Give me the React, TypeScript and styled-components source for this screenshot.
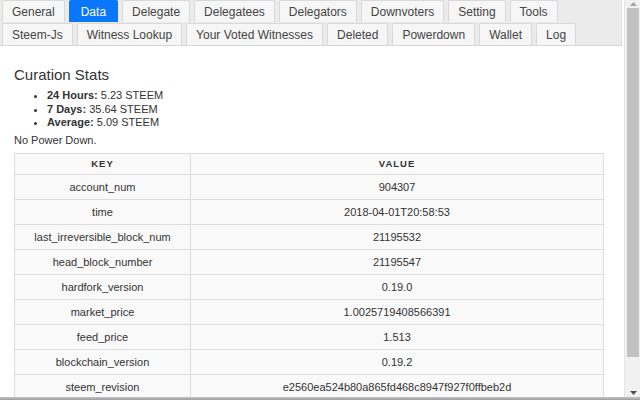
import React from "react";
import styled, { createGlobalStyle } from "styled-components";

const Global = createGlobalStyle`
  html, body { margin: 0; padding: 0; height: 400px; overflow: hidden; background: #fff; }
  body { font-family: "Liberation Sans", Arial, sans-serif; color: #333; }
`;

const Frame = styled.div`
  height: 400px;
  display: flex;
  flex-direction: column;
`;

const Viewport = styled.div`
  flex: 1;
  min-height: 0;
  display: flex;
`;

const Page = styled.div`
  flex: 1;
  min-width: 0;
  overflow: hidden;
`;

const ScrollTrack = styled.div`
  width: 16px;
  flex: none;
  background: #f1f1f1;
  border-left: 1px solid #e6e6e6;
  box-sizing: border-box;
  display: flex;
  flex-direction: column;
  align-items: center;
  padding: 0 1px 0 2px;
`;

const ArrowBox = styled.div`
  height: 8px;
  width: 100%;
  display: flex;
  align-items: center;
  justify-content: center;
  flex: none;
`;

const Thumb = styled.div`
  width: 100%;
  height: 349px;
  background: #c1c1c1;
  flex: none;
`;

const TrackSpace = styled.div`
  flex: 1;
`;

const BottomEdge = styled.div`
  height: 3px;
  background: linear-gradient(#c4c4c4, #9c9c9c);
`;

const TabBar = styled.nav`
  background: #ebebeb;
  border-right: 1px solid #dcdcdc;
  border-bottom: 1px solid #d6d6d6;
  padding: 0 0 0 2px;
  display: flex;
  flex-direction: column;
  gap: 1px;
  margin-right: 2px;
`;

const TabRow = styled.div`
  display: flex;
  gap: 4px;
`;

const Tab = styled.div<{ $active?: boolean }>`
  height: 22px;
  box-sizing: border-box;
  padding: 0 ${(p) => (p.$active ? 11 : 9)}px;
  display: flex;
  align-items: center;
  font-size: 12px;
  color: ${(p) => (p.$active ? "#fff" : "#444")};
  background: ${(p) => (p.$active ? "#0a77fb" : "#f6f6f6")};
  border: 1px solid ${(p) => (p.$active ? "#0a77fb" : "#d9d9d9")};
  border-bottom: none;
  border-radius: 2px 2px 0 0;
`;

const Content = styled.main`
  padding: 20px 18px 0 14px;
`;

const Title = styled.h3`
  margin: 0 0 5px;
  font-size: 15px;
  font-weight: normal;
  color: #333;
  line-height: 18px;
`;

const Stats = styled.ul`
  margin: 0 0 3px;
  padding-left: 33px;
  font-size: 11px;
  line-height: 13.5px;
  color: #333;
`;

const Note = styled.p`
  margin: 0 0 6px;
  font-size: 11px;
  line-height: 14px;
  color: #333;
`;

const Table = styled.table`
  width: 590px;
  border-collapse: collapse;
  font-size: 11px;
  color: #333;
  background: #f9f9f9;
`;

const Th = styled.th<{ $w?: number }>`
  height: 21px;
  box-sizing: border-box;
  padding: 0;
  border: 1px solid #dedede;
  font-size: 9.5px;
  font-weight: bold;
  letter-spacing: 1px;
  text-align: center;
  color: #333;
  width: ${(p) => (p.$w ? `${p.$w}px` : "auto")};
`;

const Td = styled.td`
  height: 25px;
  box-sizing: border-box;
  padding: 0;
  border: 1px solid #dedede;
  text-align: center;
  vertical-align: middle;
`;

const tabsRow1 = ["General", "Data", "Delegate", "Delegatees", "Delegators", "Downvoters", "Setting", "Tools"];
const tabsRow2 = ["Steem-Js", "Witness Lookup", "Your Voted Witnesses", "Deleted", "Powerdown", "Wallet", "Log"];

const rows: [string, string][] = [
  ["account_num", "904307"],
  ["time", "2018-04-01T20:58:53"],
  ["last_irreversible_block_num", "21195532"],
  ["head_block_number", "21195547"],
  ["hardfork_version", "0.19.0"],
  ["market_price", "1.0025719408566391"],
  ["feed_price", "1.513"],
  ["blockchain_version", "0.19.2"],
  ["steem_revision", "e2560ea524b80a865fd468c8947f927f0ffbeb2d"],
];

const Arrow = ({ up }: { up?: boolean }) => (
  <svg width="7" height="4" viewBox="0 0 7 4">
    <path d={up ? "M0 4 L3.5 0 L7 4 Z" : "M0 0 L3.5 4 L7 0 Z"} fill={up ? "#a3a3a3" : "#505050"} />
  </svg>
);

export default function App() {
  return (
    <Frame>
      <Global />
      <Viewport>
        <Page>
          <TabBar>
            <TabRow>
              {tabsRow1.map((t) => (
                <Tab key={t} $active={t === "Data"}>{t}</Tab>
              ))}
            </TabRow>
            <TabRow>
              {tabsRow2.map((t) => (
                <Tab key={t}>{t}</Tab>
              ))}
            </TabRow>
          </TabBar>
          <Content>
            <Title>Curation Stats</Title>
            <Stats>
              <li><b>24 Hours:</b> 5.23 STEEM</li>
              <li><b>7 Days:</b> 35.64 STEEM</li>
              <li><b>Average:</b> 5.09 STEEM</li>
            </Stats>
            <Note>No Power Down.</Note>
            <Table>
              <thead>
                <tr>
                  <Th $w={176}>KEY</Th>
                  <Th>VALUE</Th>
                </tr>
              </thead>
              <tbody>
                {rows.map(([k, v]) => (
                  <tr key={k}>
                    <Td>{k}</Td>
                    <Td>{v}</Td>
                  </tr>
                ))}
              </tbody>
            </Table>
          </Content>
        </Page>
        <ScrollTrack>
          <ArrowBox><Arrow up /></ArrowBox>
          <Thumb />
          <TrackSpace />
          <ArrowBox><Arrow /></ArrowBox>
        </ScrollTrack>
      </Viewport>
      <BottomEdge />
    </Frame>
  );
}
